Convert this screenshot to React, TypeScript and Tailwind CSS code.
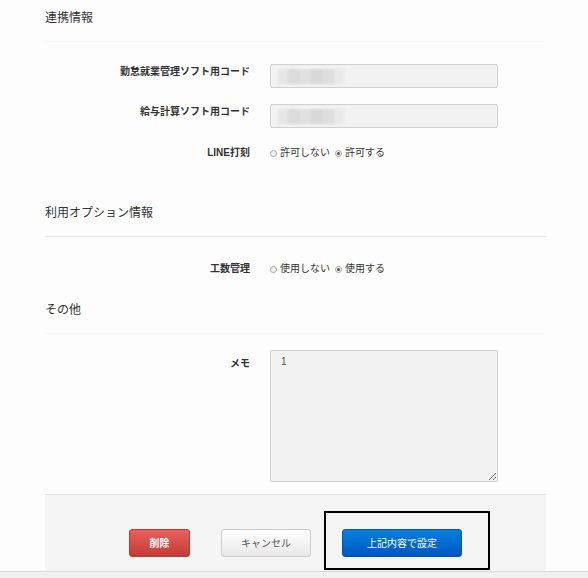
import React from "react";

const font = { fontFamily: '"Liberation Sans", "Noto Sans CJK JP", sans-serif' };

const SectionHeading = ({ title, strong }: { title: string; strong?: boolean }) => (
  <div
    className={`h-[42px] pt-[10px] border-b text-[12px] leading-[16px] text-[#333] ${
      strong ? "border-[#e8e8e8]" : "border-[#f8f8f8]"
    }`}
  >
    {title}
  </div>
);

const Radio = ({ checked, label }: { checked?: boolean; label: string }) => (
  <label className="flex h-[16px] items-center gap-[3px]">
    <span className="flex h-[7px] w-[7px] items-center justify-center rounded-full border border-[#a9a9a9] bg-[#f0f0f0]">
      {checked && <span className="h-[3px] w-[3px] rounded-full bg-[#555]" />}
    </span>
    <span className="text-[10px] leading-[16px] text-[#333]">{label}</span>
  </label>
);

const Row = ({ label, children, className = "" }: { label: string; children: React.ReactNode; className?: string }) => (
  <div className={`flex items-start gap-[20px] ${className}`}>
    <div className="h-[16px] w-[205px] text-right text-[10px] font-bold leading-[16px] text-[#333]">{label}</div>
    {children}
  </div>
);

const BlurredInput = () => (
  <div className="flex h-[24px] w-[228px] items-center rounded-[2px] border border-[#cfcfcf] bg-[#f2f2f2] px-[7px]">
    <div className="flex h-[15px] w-[66px] blur-[1px]">
      <span className="w-[10px] bg-[#e6e6e6]" />
      <span className="w-[12px] bg-[#dcdcdc]" />
      <span className="w-[11px] bg-[#e0e0e0]" />
      <span className="w-[12px] bg-[#d8d8d8]" />
      <span className="w-[11px] bg-[#dedede]" />
      <span className="w-[10px] bg-[#e9e9e9]" />
    </div>
  </div>
);

export default function App() {
  return (
    <div className="min-h-screen bg-[#fdfdfd]" style={font}>
      <div className="ml-[45px] w-[501px]">
        <SectionHeading title="連携情報" />

        <Row label="勤怠就業管理ソフト用コード" className="mt-[22px]">
          <BlurredInput />
        </Row>
        <Row label="給与計算ソフト用コード" className="mt-[16px]">
          <BlurredInput />
        </Row>
        <Row label="LINE打刻" className="mt-[17px]">
          <div className="flex h-[16px] items-center gap-[5px]">
            <Radio label="許可しない" />
            <Radio checked label="許可する" />
          </div>
        </Row>

        <div className="mt-[34px]">
          <SectionHeading title="利用オプション情報" strong />
        </div>
        <Row label="工数管理" className="mt-[24px]">
          <div className="flex h-[16px] items-center gap-[5px]">
            <Radio label="使用しない" />
            <Radio checked label="使用する" />
          </div>
        </Row>

        <div className="mt-[15px]">
          <SectionHeading title="その他" />
        </div>
        <div className="mt-[16px] flex items-start gap-[20px]">
          <div className="w-[205px] pt-[6px] text-right text-[10px] font-bold leading-[16px] text-[#333]">メモ</div>
          <textarea
            readOnly
            defaultValue="1"
            className="h-[132px] w-[228px] rounded-[2px] border border-[#cfcfcf] bg-[#f2f2f2] px-[10px] py-[4px] text-[10px] leading-[14px] text-[#555] outline-none"
            style={font}
          />
        </div>

        <div className="mt-[12px] h-[77px] border-t border-[#e6e6e6] bg-[#f5f5f5] pt-[34px]">
          <div className="flex items-start justify-center gap-[31px]">
            <button className="h-[28px] w-[61px] rounded-[3px] border border-[#b83a36] bg-gradient-to-b from-[#e9605c] to-[#c23b37] text-[10px] font-bold text-white">
              削除
            </button>
            <button className="h-[28px] w-[90px] rounded-[3px] border border-[#cccccc] bg-gradient-to-b from-white to-[#e8e8e8] text-[10px] text-[#555]">
              キャンセル
            </button>
            <div className="relative">
              <button className="h-[28px] w-[120px] rounded-[3px] border border-[#0453b4] bg-gradient-to-b from-[#0b7fd9] to-[#0057c4] text-[10px] text-white">
                上記内容で設定
              </button>
              <div className="pointer-events-none absolute left-[-18px] top-[-18px] h-[59px] w-[166px] border-2 border-black" />
            </div>
          </div>
        </div>
      </div>
      <div className="h-[8px] border-t border-[#dadada] bg-[#f0f0f0]" />
    </div>
  );
}
